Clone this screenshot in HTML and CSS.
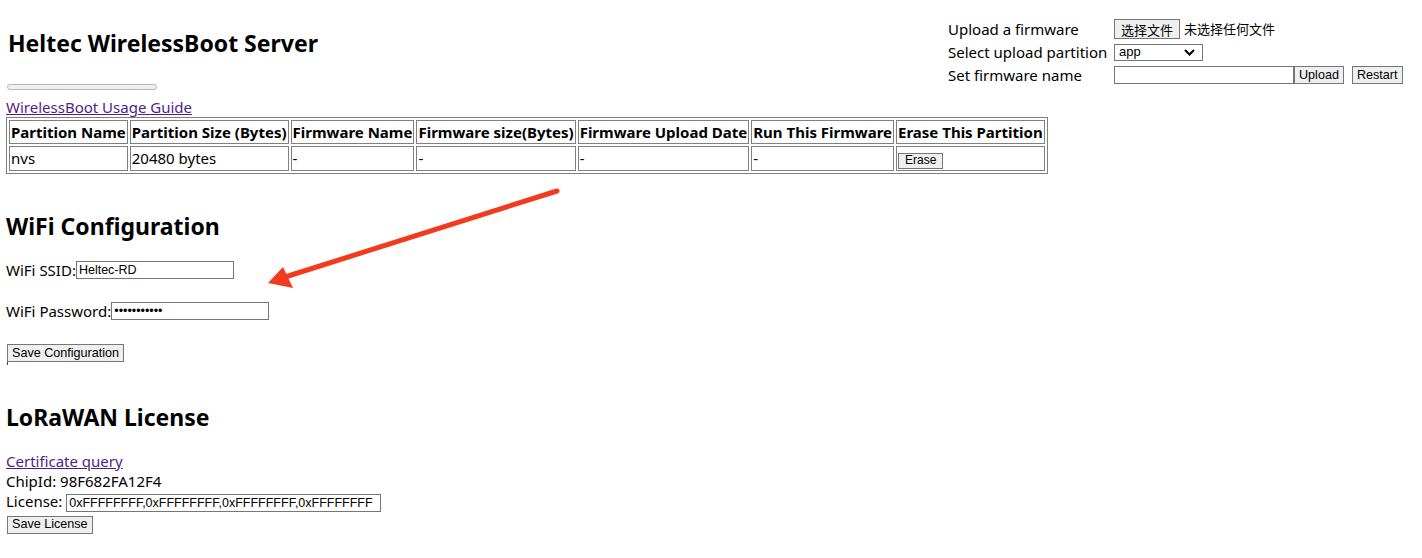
FILE: index.html
```html
<!DOCTYPE html>
<html>
<head>
<meta charset="utf-8">
<link rel="stylesheet" href="styles.css">
</head>
<body>
<form class="upload">
  <span class="lbl">Upload a firmware</span>
  <span class="ctl"><button type="button" class="btn cjk">选择文件</button><span class="nofile">未选择任何文件</span></span>
  <span class="lbl">Select upload partition</span>
  <span class="ctl"><span class="select">app<svg width="11" height="7" viewBox="0 0 11 7"><path d="M1 1 L5.5 5.5 L10 1" fill="none" stroke="#000" stroke-width="2"/></svg></span></span>
  <span class="lbl">Set firmware name</span>
  <span class="ctl"><input class="txt fwname" type="text"><button type="button" class="btn">Upload</button><button type="button" class="btn restart">Restart</button></span>
</form>
<h1>Heltec WirelessBoot Server</h1>
<div class="progress"><div class="bar"></div></div>
<a class="link" href="#">WirelessBoot Usage Guide</a>
<table class="parts">
  <tr><th>Partition Name</th><th>Partition Size (Bytes)</th><th>Firmware Name</th><th>Firmware size(Bytes)</th><th>Firmware Upload Date</th><th>Run This Firmware</th><th>Erase This Partition</th></tr>
  <tr><td>nvs</td><td>20480 bytes</td><td>-</td><td>-</td><td>-</td><td>-</td><td><button type="button" class="btn erase">Erase</button></td></tr>
</table>

<h2 class="wifi-h">WiFi Configuration</h2>
<p class="row first">WiFi SSID:<input class="txt ssid" type="text" value="Heltec-RD"></p>
<p class="row">WiFi Password:<input class="txt pwd" type="password" value="12345678901"></p>
<p class="row save">
  <span class="btn-wrap"><button type="button" class="btn">Save Configuration</button></span>
</p>

<h2 class="lora-h">LoRaWAN License</h2>
<div class="lic">
  <a class="link" href="#">Certificate query</a>
  <div>ChipId: 98F682FA12F4</div>
  <div>License: <input class="txt license" type="text" value="0xFFFFFFFF,0xFFFFFFFF,0xFFFFFFFF,0xFFFFFFFF"></div>
  <div><span class="btn-wrap"><button type="button" class="btn">Save License</button></span></div>
</div>

<svg class="arrow" width="1422" height="558" viewBox="0 0 1422 558">
  <line x1="557" y1="191" x2="285" y2="277" stroke="#f33a1e" stroke-width="5" stroke-linecap="round"/>
  <polygon points="268,283 283,267 293,288" fill="#f33a1e"/>
</svg>
</body>
</html>
```

FILE: styles.css
```css
html, body {
  margin: 0;
  padding: 0;
  background: #fff;
}
body {
  font-family: "Noto Sans", "Open Sans", sans-serif;
  font-size: 15px;
  color: #000;
  padding: 0 6px;
  position: relative;
}
.upload {
  float: right;
  margin: 19px 8px 0 0;
  display: grid;
  grid-template-columns: 166px auto;
  row-gap: 3px;
  align-items: center;
  line-height: 20px;
  width: 460px;
}
.lbl {
  white-space: nowrap;
}
.ctl {
  display: flex;
  align-items: center;
}
.btn {
  font-family: "Liberation Sans", Arial, sans-serif;
  font-size: 12.6px;
  background: #efefef;
  border: 1px solid #767676;
  border-radius: 0;
  padding: 0 4px;
  height: 18px;
  line-height: 15px;
  color: #000;
  margin: 0;
}
.btn.cjk {
  font-family: "Noto Sans CJK SC", sans-serif;
  font-size: 13px;
  height: 20px;
  padding: 0 6px;
}
.nofile {
  font-family: "Noto Sans CJK SC", sans-serif;
  font-size: 13px;
  margin-left: 4px;
}
.select {
  display: inline-flex;
  align-items: center;
  justify-content: space-between;
  width: 89px;
  height: 17px;
  box-sizing: border-box;
  border: 1px solid #767676;
  font-family: "Liberation Sans", Arial, sans-serif;
  font-size: 13px;
  padding: 0 7px 0 4px;
}
.txt {
  font-family: "Liberation Sans", Arial, sans-serif;
  font-size: 12.5px;
  border: 1px solid #767676;
  padding: 0 2px;
  height: 18px;
  box-sizing: border-box;
  margin: 0;
  color: #000;
}
.fwname {
  width: 180px;
}
.restart {
  margin-left: 8px;
}
h1 {
  font-size: 23px;
  font-weight: bold;
  margin: 0;
  padding: 29px 2px 0;
  line-height: 28px;
}
.progress {
  margin: 27px 1px 0;
  width: 150px;
  height: 6px;
  box-sizing: border-box;
  border: 1px solid #b9b9b9;
  border-radius: 3px;
  background: #efefef;
}
.link {
  color: #551a8b;
  display: inline-block;
  margin-top: 7px;
  line-height: 20px;
}
.parts {
  border: 1px solid #808080;
  border-spacing: 2px;
  margin-top: 0;
}
.parts th, .parts td {
  border: 1px solid #808080;
  padding: 1px 1px;
  text-align: left;
  line-height: 20px;
  white-space: nowrap;
}
.parts th {
  font-weight: bold;
}
.erase {
  padding: 0 6px;
  height: 16px;
  line-height: 13px;
  font-size: 12px;
}
h2 {
  font-size: 23px;
  font-weight: bold;
  margin: 0;
  line-height: 30px;
}
.wifi-h {
  margin-top: 37px;
}
.row {
  margin: 21px 0 0;
  line-height: 20px;
  display: flex;
  align-items: center;
}
.row.first {
  margin-top: 19px;
}
.row.save {
  margin-top: 20px;
}
.btn-wrap {
  display: inline-block;
  border-left: 1px solid transparent;
  position: relative;
}
.btn-wrap::after {
  content: "";
  position: absolute;
  left: 0;
  bottom: -3px;
  width: 1px;
  height: 3px;
  background: #444;
}
.ssid {
  width: 158px;
}
.pwd {
  width: 158px;
}
.lora-h {
  margin-top: 40px;
}
.lic {
  margin-top: 19px;
  line-height: 20px;
}
.lic .link {
  margin-top: 0;
}
.license {
  width: 315px;
}
.arrow {
  position: absolute;
  left: 0;
  top: 0;
  pointer-events: none;
}
```
